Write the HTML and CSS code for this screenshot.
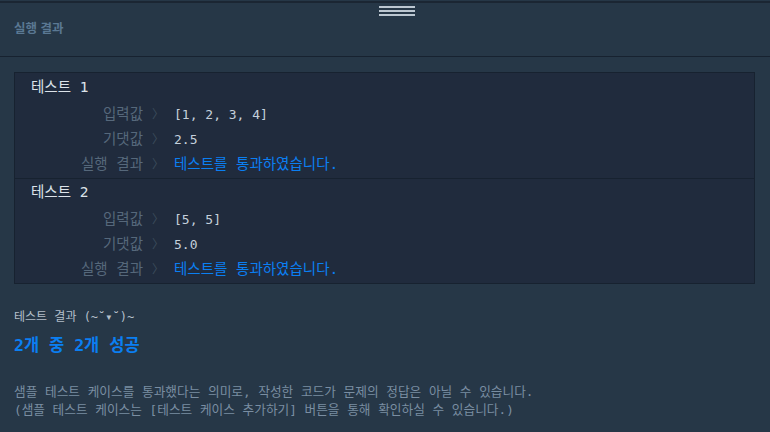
FILE: index.html
```html
<!DOCTYPE html>
<html lang="ko">
<head>
<meta charset="utf-8">
<link rel="stylesheet" href="styles.css">
</head>
<body>
<div class="panel">
  <div class="handle"><span></span><span></span><span></span></div>
  <header class="panel-head">실행 결과</header>
  <main class="panel-body">
    <div class="results">
      <section class="test">
        <div class="test-title">테스트 1</div>
        <div class="row"><span class="label">입력값</span><span class="chev">〉</span><span class="value">[1, 2, 3, 4]</span></div>
        <div class="row"><span class="label">기댓값</span><span class="chev">〉</span><span class="value">2.5</span></div>
        <div class="row"><span class="label">실행 결과</span><span class="chev">〉</span><span class="value pass">테스트를 통과하였습니다.</span></div>
      </section>
      <section class="test">
        <div class="test-title">테스트 2</div>
        <div class="row"><span class="label">입력값</span><span class="chev">〉</span><span class="value">[5, 5]</span></div>
        <div class="row"><span class="label">기댓값</span><span class="chev">〉</span><span class="value">5.0</span></div>
        <div class="row"><span class="label">실행 결과</span><span class="chev">〉</span><span class="value pass">테스트를 통과하였습니다.</span></div>
      </section>
    </div>
    <div class="summary-title">테스트 결과 (~˘▾˘)~</div>
    <div class="summary">2개 중 2개 성공</div>
    <p class="note">샘플 테스트 케이스를 통과했다는 의미로, 작성한 코드가 문제의 정답은 아닐 수 있습니다.<br>(샘플 테스트 케이스는 [테스트 케이스 추가하기] 버튼을 통해 확인하실 수 있습니다.)</p>
  </main>
</div>
</body>
</html>
```
FILE: styles.css
```css
html, body {
  margin: 0;
  padding: 0;
  background: #263747;
}
body {
  width: 770px;
  height: 432px;
  overflow: hidden;
  font-family: "DejaVu Sans Mono", "Noto Sans CJK KR", monospace;
}
.panel {
  position: relative;
  padding-top: 1px;
}
.handle {
  position: absolute;
  left: 379px;
  top: 6px;
  width: 36px;
  display: flex;
  flex-direction: column;
  gap: 2px;
}
.handle span {
  display: block;
  height: 2px;
  background: #bcc7d1;
}
.panel-head {
  border-top: 2px solid #1b2633;
  border-bottom: 1px solid #172230;
  height: 56px;
  box-sizing: border-box;
  padding: 16px 14px 0;
  font-family: "Noto Sans CJK KR", sans-serif;
  font-weight: bold;
  font-size: 12.5px;
  line-height: 18px;
  color: #5a7893;
}
.panel-body {
  padding: 15px 14px 0;
}
.results {
  border: 1px solid #172230;
  background: #202b3d;
  width: 741px;
  box-sizing: border-box;
}
.test {
  padding: 2px 0 1px;
}
.test + .test {
  border-top: 1px solid #172230;
  padding-top: 1px;
}
.test-title {
  padding-left: 16px;
  font-size: 14.5px;
  line-height: 25px;
  height: 25px;
  margin-bottom: 2px;
  color: #dce3ea;
}
.row {
  display: flex;
  align-items: baseline;
  font-size: 14.5px;
  line-height: 25px;
  height: 25px;
}
.label {
  width: 128px;
  text-align: right;
  color: #56687b;
}
.chev {
  width: 31px;
  padding-left: 9px;
  box-sizing: border-box;
  color: #3b4b5c;
  font-size: 12px;
}
.value {
  font-size: 13px;
  color: #c4d0dc;
}
.value.pass {
  font-size: 14.5px;
  color: #0b7ff2;
}
.summary-title {
  margin-top: 24px;
  font-size: 12px;
  line-height: 18px;
  color: #b4bfca;
}
.summary {
  margin-top: 10px;
  font-weight: bold;
  font-size: 16.5px;
  line-height: 20px;
  color: #0b7ff2;
}
.note {
  margin: 27px 0 0;
  font-size: 12.7px;
  line-height: 18px;
  color: #7a8ea2;
}
```
